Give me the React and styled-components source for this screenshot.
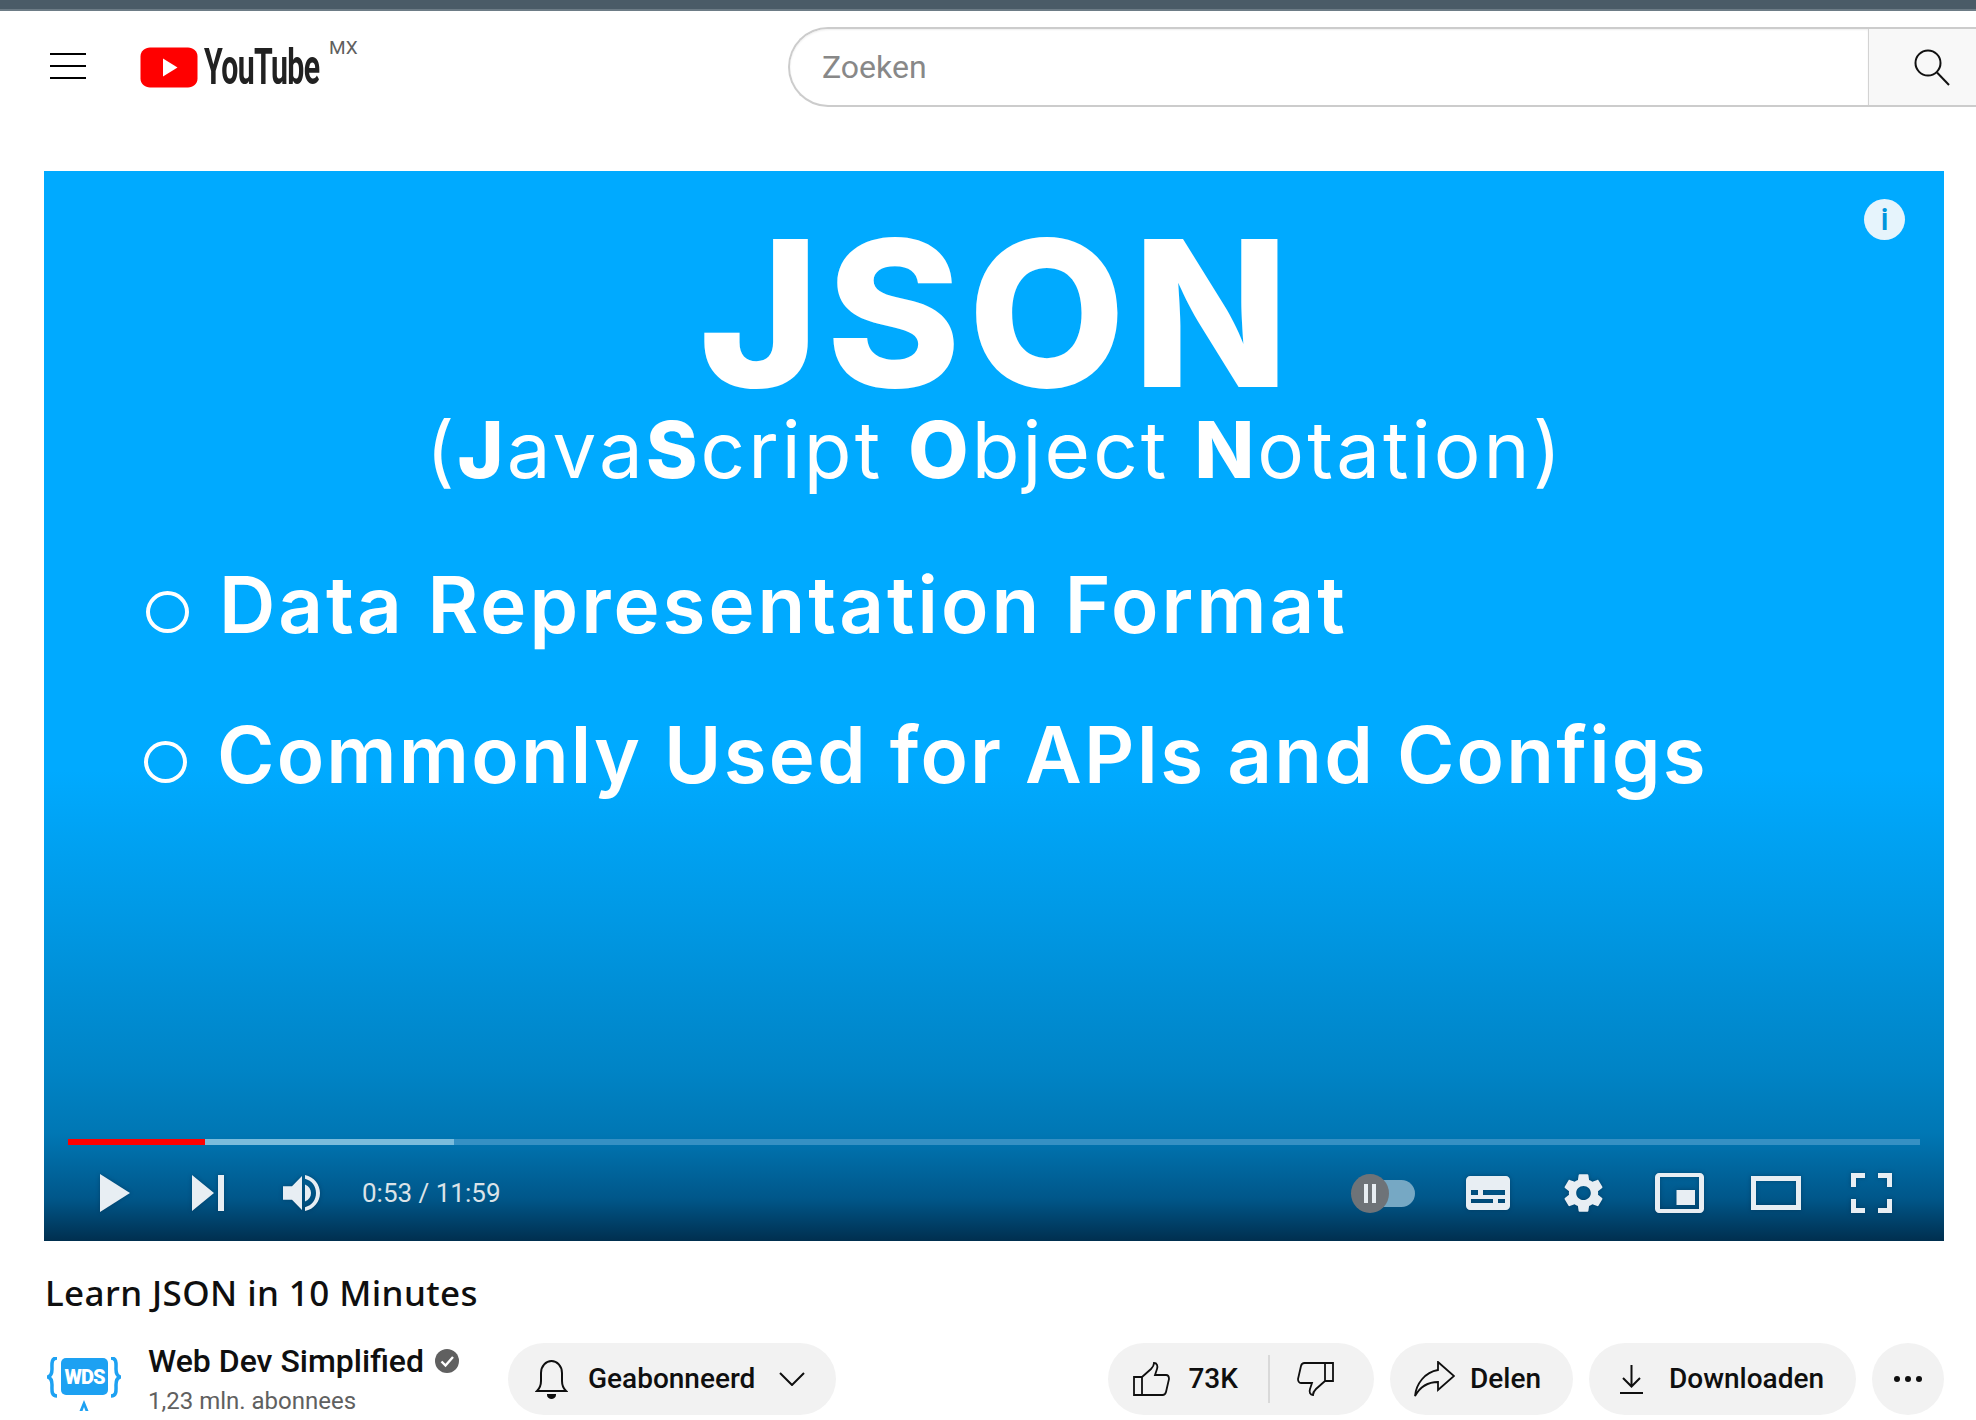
import React from 'react'
import styled, { createGlobalStyle } from 'styled-components'

const GlobalStyle = createGlobalStyle`
  html, body { margin: 0; padding: 0; background: #fff; }
  body { font-family: Roboto, "Liberation Sans", sans-serif; overflow: hidden; }
`

function App() {
  return (
    <Page>
      <GlobalStyle />
      <TopStrip />
      <Header>
        <Menu><span /><span /><span /></Menu>
        <Logo>
          <svg width="58" height="41" viewBox="0 0 58 41">
            <path d="M10 0.500h38c5 0 9.500 3.500 9.500 9v22c0 5.500-4.500 9-9.500 9H10c-5 0-9.500-3.500-9.500-9v-22c0-5.500 4.500-9 9.500-9z" fill="#ff0000" />
            <path d="M23 11.500v18l14.500-9z" fill="#fff" />
          </svg>
          <Wordmark>YouTube</Wordmark>
          <Country>MX</Country>
        </Logo>
        <Search>
          <SearchInput>Zoeken</SearchInput>
          <SearchButton>
            <svg width="39" height="37" viewBox="0 0 39 37" fill="none" stroke="#111" strokeWidth="2">
              <circle cx="15" cy="14" r="12.500" />
              <path d="M24 23.500l12 12.500" />
            </svg>
          </SearchButton>
        </Search>
      </Header>

      <Video>
        <InfoBadge>i</InfoBadge>
        <Slide>
          <SlideTitle>JSON</SlideTitle>
          <SlideSubtitle>(<b>J</b>ava<b>S</b>cript <b>O</b>bject <b>N</b>otation)</SlideSubtitle>
          <Bullet $top={65} $left={102} $spacing={3}><Dot $top={13} />Data Representation Format</Bullet>
          <Bullet $top={60} $left={100} $spacing={2.2}><Dot $top={13} />Commonly Used for APIs and Configs</Bullet>
        </Slide>
        <Controls>
          <Progress>
            <Played />
            <Buffered />
          </Progress>
          <ControlRow>
            <ControlGroup>
              <Icon width="30" height="38" viewBox="0 0 30 38"><path d="M0 0l30 19L0 38z" /></Icon>
              <Icon $ml={62} width="34" height="36" viewBox="0 0 34 36">
                <path d="M0 0l22 18L0 36zM26 0h6v36h-6z" />
              </Icon>
              <Icon $ml={57} width="37" height="38" viewBox="0 0 37 40" preserveAspectRatio="none">
                <path d="M0 13h9L19 2v36L9 27H0z" />
                <path d="M22 11c4 2 6 5 6 9s-2 7-6 9z" />
                <path d="M22 1c9 2 15 10 15 19s-6 17-15 19v-4c7-2 11-8 11-15s-4-13-11-15z" />
              </Icon>
              <Time>0:53 / 11:59</Time>
            </ControlGroup>
            <ControlGroup>
              <Toggle><Knob><i /><i /></Knob></Toggle>
              <Icon $ml={51} width="44" height="34" viewBox="0 0 44 34">
                <path fillRule="evenodd" d="M4 0h36c2 0 4 2 4 4v26c0 2-2 4-4 4H4c-2 0-4-2-4-4V4c0-2 2-4 4-4zM5 19h7v-5H5zm12 0h22v-5H17zM5 27h22v-4H5zm27 0h7v-4h-7z" />
              </Icon>
              <Icon $ml={54} width="39" height="40" viewBox="2.400 1.800 19.200 20.400" preserveAspectRatio="none">
                <path d="M19.140 12.940c.04-.3.06-.61.06-.94 0-.32-.02-.64-.07-.94l2.030-1.580c.18-.14.23-.41.12-.61l-1.920-3.320c-.12-.22-.37-.29-.59-.22l-2.390.96c-.5-.38-1.030-.7-1.620-.94l-.36-2.540c-.04-.24-.24-.41-.48-.41h-3.840c-.24 0-.43.17-.47.41l-.36 2.540c-.59.24-1.130.57-1.620.94l-2.390-.96c-.22-.08-.47 0-.59.22L2.740 8.870c-.12.21-.08.47.12.61l2.030 1.580c-.05.3-.09.63-.09.94s.02.64.07.94l-2.030 1.580c-.18.14-.23.41-.12.61l1.920 3.320c.12.22.37.29.59.22l2.390-.96c.5.38 1.030.7 1.620.94l.36 2.540c.05.24.24.41.48.41h3.840c.24 0 .44-.17.47-.41l.36-2.540c.59-.24 1.130-.56 1.620-.94l2.390.96c.22.08.47 0 .59-.22l1.920-3.320c.12-.22.07-.47-.12-.61l-2.010-1.580zM12 15.600c-1.980 0-3.600-1.620-3.600-3.600s1.620-3.600 3.600-3.600 3.600 1.620 3.600 3.600-1.620 3.600-3.600 3.600z" />
              </Icon>
              <Icon $ml={52} width="49" height="40" viewBox="0 0 49 40">
                <path fillRule="evenodd" d="M4 0h41c2 0 4 2 4 4v32c0 2-2 4-4 4H4c-2 0-4-2-4-4V4c0-2 2-4 4-4zm1 4v32h39V4z" />
                <path d="M21.500 17H40v15H21.500z" />
              </Icon>
              <Icon $ml={47} width="50" height="34" viewBox="0 0 50 34">
                <path fillRule="evenodd" d="M0 0h50v34H0zm5 5v24h40V5z" />
              </Icon>
              <Icon $ml={50} width="41" height="40" viewBox="0 0 41 40">
                <path d="M0 0h14v5H5v9H0zM27 0h14v14h-5V5h-9zM0 26h5v9h9v5H0zM36 26h5v14H27v-5h9z" />
              </Icon>
            </ControlGroup>
          </ControlRow>
        </Controls>
      </Video>

      <VideoTitle>Learn JSON in 10 Minutes</VideoTitle>
      <MetaRow>
        <Channel>
          <ChannelLogo width="74" height="54" viewBox="0 0 74 54">
            <rect x="14" y="1" width="47" height="37" rx="5" fill="#1da1f2" />
            <path d="M10 1C4 1 5 7 5 12c0 4-1 7-4 8 3 1 4 4 4 8 0 5-1 11 5 11M64 1c6 0 5 6 5 11 0 4 1 7 4 8-3 1-4 4-4 8 0 5 1 11-5 11" fill="none" stroke="#1da1f2" strokeWidth="3.500" />
            <path d="M37 43l-4.500 11h3l1.500-4 1.500 4h3z" fill="#1da1f2" />
            <text x="37.500" y="27" textAnchor="middle" fontFamily="Roboto, sans-serif" fontWeight="900" fontSize="20" letterSpacing="-1" fill="#fff">WDS</text>
          </ChannelLogo>
          <ChannelText>
            <ChannelName>
              Web Dev Simplified
              <svg width="24" height="24" viewBox="0 0 24 24">
                <circle cx="12" cy="12" r="12" fill="#606060" />
                <path d="M6.500 12.500l4 4 7.500-8.500" fill="none" stroke="#fff" strokeWidth="2.400" />
              </svg>
            </ChannelName>
            <Subscribers>1,23 mln. abonnees</Subscribers>
          </ChannelText>
          <SubscribeButton>
            <svg width="33" height="40" viewBox="0 0 33 40" fill="none" stroke="#0f0f0f" strokeWidth="2">
              <path d="M2 32c3-3 4-5 4-10v-8C6 7 11 2 16.500 2S27 7 27 14v8c0 5 1 7 4 10z" />
              <path d="M13 36h7c0 2-2 3-3.500 3S13 38 13 36z" fill="#0f0f0f" />
            </svg>
            <SubscribeLabel>Geabonneerd</SubscribeLabel>
            <svg width="26" height="14" viewBox="0 0 26 14" fill="none" stroke="#0f0f0f" strokeWidth="2">
              <path d="M1 1l12 12L25 1" />
            </svg>
          </SubscribeButton>
        </Channel>
        <Actions>
          <Pill $left={25} $right={40}>
            <svg width="37" height="34" viewBox="0 0 37 34" fill="none" stroke="#0f0f0f" strokeWidth="1.800">
              <path d="M1 15h8v18H1zM9 15l9-8c2-2 3-4 3-6 3 0 4 3 3 6l-2 6h11c2 0 3 2 3 4l-3 13c-.5 2-2 3-3.500 3H9" />
            </svg>
            <PillLabel $ml={18}>73K</PillLabel>
            <Divider />
            <svg width="37" height="34" viewBox="0 0 37 34" fill="none" stroke="#0f0f0f" strokeWidth="1.800">
              <path d="M36 19h-8V1h8zM28 19l-9 8c-2 2-3 4-3 6-3 0-4-3-3-6l2-6H4c-2 0-3-2-3-4L4 4c.5-2 2-3 3.500-3H28" />
            </svg>
          </Pill>
          <Pill $left={24} $right={32}>
            <svg width="41" height="36" viewBox="0 0 41 36" fill="none" stroke="#0f0f0f" strokeWidth="1.800">
              <path d="M24 1l16 14-16 14v-8C13 21 6 26 1 35c1-12 10-24 23-26z" />
            </svg>
            <PillLabel $ml={15}>Delen</PillLabel>
          </Pill>
          <Pill $left={31} $right={32}>
            <svg width="23" height="29" viewBox="0 0 23 29" fill="none" stroke="#0f0f0f" strokeWidth="2">
              <path d="M11.500 0v21M3 13l8.500 8.500L20 13M0 28h23" />
            </svg>
            <PillLabel $ml={26}>Downloaden</PillLabel>
          </Pill>
          <MoreButton><b /><b /><b /></MoreButton>
        </Actions>
      </MetaRow>
    </Page>
  )
}

const Page = styled.div`
  width: 1976px;
  height: 1420px;
  overflow: hidden;
  background: #fff;
`
const TopStrip = styled.div`
  height: 9px;
  background: #4a5b67;
  border-bottom: 2px solid #6d7c86;
`
const Header = styled.header`
  display: flex;
  align-items: flex-start;
  height: 160px;
  padding: 16px 0 0 50px;
  box-sizing: border-box;
`
const Menu = styled.div`
  display: flex;
  flex-direction: column;
  gap: 10px;
  width: 36px;
  margin-top: 26px;
  span {
    display: block;
    height: 2px;
    background: #000;
  }
`
const Logo = styled.div`
  display: flex;
  align-items: flex-start;
  width: 648px;
  margin-left: 54px;
  padding-top: 20px;
  svg { flex: none; }
`
const Wordmark = styled.span`
  display: block;
  flex: none;
  width: 117px;
  margin-left: 6px;
  font: 700 50px/40px Roboto, sans-serif;
  color: #212121;
  letter-spacing: -1px;
  transform: scaleX(0.605);
  transform-origin: left center;
`
const Country = styled.span`
  margin: -10px 0 0 8px;
  font: 400 19px/22px Roboto, sans-serif;
  color: #606060;
`
const Search = styled.div`
  display: flex;
  flex: 1;
  height: 80px;
  box-sizing: border-box;
  border: 2px solid #ccc;
  border-right: 0;
  border-radius: 40px 0 0 40px;
`
const SearchInput = styled.div`
  flex: 1;
  padding-left: 32px;
  font: 400 32px/76px Roboto, sans-serif;
  color: #888;
  box-shadow: inset 0 1px 2px #eee;
  border-radius: 40px 0 0 40px;
`
const SearchButton = styled.div`
  display: flex;
  align-items: center;
  justify-content: flex-end;
  width: 108px;
  padding-right: 24px;
  box-sizing: border-box;
  background: #f8f8f8;
  border-left: 1px solid #d3d3d3;
`
const Video = styled.section`
  position: relative;
  display: flex;
  flex-direction: column;
  width: 1900px;
  height: 1070px;
  margin-left: 44px;
  background: linear-gradient(
    180deg,
    #00aaff 0%,
    #00aaff 56%,
    #0098e4 70%,
    #0084c6 84%,
    #0077b4 90%,
    #00578a 96%,
    #002f4f 100%
  );
`
const InfoBadge = styled.div`
  position: absolute;
  top: 28px;
  right: 39px;
  width: 41px;
  height: 41px;
  border-radius: 50%;
  background: #e6f4fc;
  color: #0095dd;
  font: 500 32px/41px Roboto, sans-serif;
  text-align: center;
`
const Slide = styled.div`
  display: flex;
  flex: 1;
  flex-direction: column;
  color: #fff;
  font-family: Inter, "Open Sans", sans-serif;
`
const SlideTitle = styled.div`
  margin-top: 49px;
  padding-left: 655px;
  font-size: 204px;
  font-weight: 800;
  line-height: 185px;
  letter-spacing: 7px;
`
const SlideSubtitle = styled.div`
  padding-left: 382px;
  font-size: 78px;
  font-weight: 400;
  line-height: 90px;
  letter-spacing: 3.100px;
  b { font-weight: 800; }
`
const Bullet = styled.div`
  display: flex;
  align-items: center;
  margin-top: ${p => p.$top}px;
  margin-left: ${p => p.$left}px;
  font-size: 78px;
  font-weight: 600;
  line-height: 90px;
  letter-spacing: ${p => p.$spacing}px;
`
const Dot = styled.span`
  flex: none;
  width: 43px;
  height: 42px;
  box-sizing: border-box;
  margin: ${p => p.$top}px 30px 0 0;
  border: 4px solid #fff;
  border-radius: 50%;
`
const Controls = styled.div`
  padding: 0 24px;
`
const Progress = styled.div`
  display: flex;
  height: 6px;
  background: #3590c4;
`
const Played = styled.div`
  width: 137px;
  background: #ff0000;
`
const Buffered = styled.div`
  width: 249px;
  background: #7bbcdc;
`
const ControlRow = styled.div`
  display: flex;
  align-items: center;
  justify-content: space-between;
  height: 44px;
  margin-top: 26px;
  padding: 0 28px 26px 32px;
`
const ControlGroup = styled.div`
  display: flex;
  align-items: center;
`
const Icon = styled.svg`
  flex: none;
  margin-left: ${p => p.$ml || 0}px;
  fill: #e8eef3;
  filter: drop-shadow(0 0 2px rgba(0, 40, 70, 0.45));
`
const Time = styled.span`
  margin-left: 42px;
  font: 400 26px/30px Roboto, sans-serif;
  color: #dbe3e8;
`
const Toggle = styled.div`
  position: relative;
  width: 45px;
  height: 27px;
  margin-left: 19px;
  border-radius: 0 14px 14px 0;
  background: #76a8c4;
`
const Knob = styled.div`
  position: absolute;
  top: -6px;
  left: -19px;
  display: flex;
  align-items: center;
  justify-content: center;
  gap: 4px;
  width: 38px;
  height: 39px;
  border-radius: 50%;
  background: #6e7378;
  i {
    display: block;
    width: 4px;
    height: 19px;
    background: #e8eef3;
  }
`
const VideoTitle = styled.h1`
  margin: 30px 0 0 45px;
  font: 500 35px/44px "Noto Sans", sans-serif;
  letter-spacing: 0.4px;
  color: #0f0f0f;
`
const MetaRow = styled.div`
  display: flex;
  align-items: center;
  justify-content: space-between;
  height: 72px;
  margin: 28px 32px 0 47px;
`
const Channel = styled.div`
  display: flex;
  align-items: center;
`
const ChannelLogo = styled.svg`
  flex: none;
  margin-top: 9px;
`
const ChannelText = styled.div`
  width: 360px;
  margin-left: 27px;
`
const ChannelName = styled.div`
  display: flex;
  align-items: center;
  gap: 11px;
  font: 500 32px/36px Roboto, sans-serif;
  color: #0f0f0f;
`
const Subscribers = styled.div`
  margin-top: 8px;
  font: 400 24px/28px Roboto, sans-serif;
  color: #606060;
`
const SubscribeButton = styled.div`
  display: flex;
  align-items: center;
  width: 328px;
  height: 72px;
  padding: 0 31px 0 27px;
  box-sizing: border-box;
  border-radius: 36px;
  background: #f2f2f2;
`
const SubscribeLabel = styled.span`
  flex: 1;
  margin-left: 20px;
  font: 500 28px/36px Roboto, sans-serif;
  color: #0f0f0f;
`
const Actions = styled.div`
  display: flex;
  align-items: center;
  gap: 16px;
`
const Pill = styled.div`
  display: flex;
  align-items: center;
  height: 72px;
  padding: 0 ${p => p.$right}px 0 ${p => p.$left}px;
  box-sizing: border-box;
  border-radius: 36px;
  background: #f2f2f2;
`
const PillLabel = styled.span`
  margin-left: ${p => p.$ml}px;
  font: 500 28px/36px Roboto, sans-serif;
  color: #0f0f0f;
`
const Divider = styled.div`
  width: 2px;
  height: 48px;
  margin: 0 27px 0 30px;
  background: #d9d9d9;
`
const MoreButton = styled.div`
  display: flex;
  align-items: center;
  justify-content: center;
  gap: 5px;
  width: 72px;
  height: 72px;
  border-radius: 50%;
  background: #f2f2f2;
  b {
    width: 6px;
    height: 6px;
    border-radius: 50%;
    background: #0f0f0f;
  }
`

export default App
